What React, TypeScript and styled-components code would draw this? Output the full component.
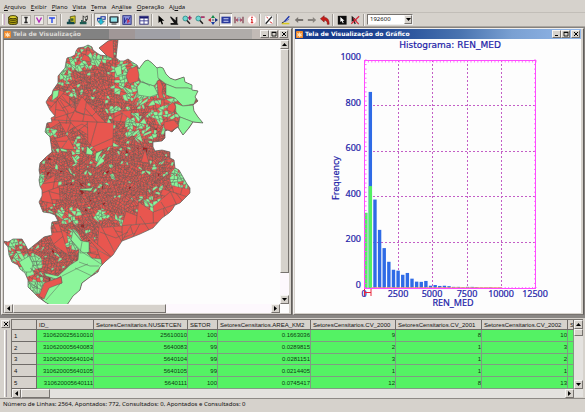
import React from "react";
import styled, { createGlobalStyle, css } from "styled-components";

const FACE = "#d6d2cc";
const UI_FONT = `"Noto Sans", "Open Sans", sans-serif`;
const GRID_FONT = `"Liberation Sans", Arial, sans-serif`;

const GlobalStyle = createGlobalStyle`
  * { box-sizing: border-box; }
  body { margin: 0; background: ${FACE}; }
  button, select { font: inherit; color: inherit; padding: 0; margin: 0; border: 0; background: none; border-radius: 0; }
`;

const raised = css`
  border: 1px solid;
  border-color: #f6f4f2 #77736f #77736f #f6f4f2;
`;

const Page = styled.div`
  display: flex;
  flex-direction: column;
  height: 100vh;
  min-height: 300px;
  background: ${FACE};
  color: #111;
  font: 6px/10px ${UI_FONT};
  overflow: hidden;
`;

/* ---------- menu and toolbar ---------- */

const MenuBar = styled.nav`
  display: flex;
  flex: none;
  gap: 5px;
  height: 12px;
  padding: 1px 4px 0;
`;

const MenuItem = styled.button`
  line-height: 10px;
  white-space: nowrap;
`;

const Toolbar = styled.div`
  display: flex;
  flex: none;
  align-items: center;
  height: 15px;
  padding: 0 2px;
  border-top: 1px solid #c2beb8;
  border-bottom: 1px solid #aaa6a0;
`;

const Grip = styled.span`
  width: 3px;
  height: 11px;
  margin-right: 1px;
  border-left: 1px solid #fff;
  border-right: 1px solid #c8a8c8;
`;

const ToolButton = styled.button<{ $pressed?: boolean }>`
  width: 13px;
  height: 13px;
  flex: none;
  display: grid;
  place-items: center;
  ${(p) =>
    p.$pressed &&
    css`
      background: #e8e6e2;
      box-shadow: inset 1px 1px #98948e, inset -1px -1px #fff;
    `}
  svg {
    display: block;
    width: 10px;
    height: 10px;
  }
`;

const Separator = styled.span<{ $wide?: boolean }>`
  flex: none;
  width: 2px;
  height: 12px;
  margin: 0 ${(p) => (p.$wide ? 2 : 1)}px;
  border-left: 1px solid #a29e98;
  border-right: 1px solid #f2f0ee;
`;

const Combo = styled.label`
  display: flex;
  width: 46px;
  height: 11px;
  background: #fff;
  border: 1px solid;
  border-color: #77736f #eee #eee #77736f;
`;

const ComboSelect = styled.select`
  appearance: none;
  flex: 1;
  min-width: 0;
  padding-left: 2px;
  line-height: 9px;
  outline: 0;
`;

const ComboArrow = styled.span`
  width: 8px;
  height: 9px;
  flex: none;
  display: grid;
  place-items: center;
  background: ${FACE};
  pointer-events: none;
  ${raised}
`;

/* ---------- windows ---------- */

const Workspace = styled.main`
  display: grid;
  grid-template-columns: minmax(0, 1fr) minmax(0, 1fr);
  flex: 1;
  min-height: 0;
  gap: 1px;
  padding: 1px 1px 0;
  background: #85817d;
  border-bottom: 3px solid #8a8784;
`;

const WindowFrame = styled.section`
  display: flex;
  flex-direction: column;
  min-width: 0;
  min-height: 0;
  background: ${FACE};
  padding: 0 2px 1px 1px;
  border: 1px solid;
  border-color: #f0eeec #615e5b #77736f #f0eeec;
`;

const TitleBar = styled.header<{ $active?: boolean }>`
  display: flex;
  flex: none;
  align-items: center;
  height: 10px;
  padding: 0 1px;
  gap: 1px;
  color: ${(p) => (p.$active ? "#fff" : "#dcd9d5")};
  background: ${(p) =>
    p.$active
      ? "linear-gradient(90deg, #173c8c 0 22%, #2f59a0 42%, #4a74b0 58%, #7aa0d2 76%, #93b8ea 100%)"
      : "linear-gradient(90deg, #828282 0 37%, #a09797 37% 46%, #a0a0a6 46% 62%, #b0acaa 62% 87%, #c2bab6 87%)"};
`;

const TitleText = styled.h1`
  margin: 0;
  flex: 1;
  padding-left: 1px;
  font: bold 6px/10px "DejaVu Sans", Verdana, sans-serif;
  white-space: nowrap;
  overflow: hidden;
`;

const TitleIcon = styled.svg`
  width: 7px;
  height: 7px;
  flex: none;
`;

const CaptionButton = styled.button<{ $gap?: boolean }>`
  && {
    width: 9px;
    height: 8px;
    flex: none;
    display: grid;
    place-items: center;
    background: ${FACE};
    margin-left: ${(p) => (p.$gap ? "0" : "-1px")};
    ${raised}
  }
  svg {
    width: 6px;
    height: 6px;
    display: block;
  }
`;

const Pane = styled.div`
  flex: 1;
  min-height: 0;
  min-width: 0;
  background: #fdfdfd;
`;

const ScrollPane = styled.div`
  display: grid;
  grid-template-columns: minmax(0, 1fr) 9px;
  grid-template-rows: minmax(0, 1fr) 9px;
  flex: 1;
  min-height: 0;
  background: #fdfdfd;
  border-top: 1px solid #6c6966;
  border-left: 1px solid #8c8884;
`;

const Drawing = styled.svg`
  display: block;
  width: 100%;
  height: 100%;
`;

const Track = styled.div<{ $vertical?: boolean; $tone?: string }>`
  display: flex;
  flex-direction: ${(p) => (p.$vertical ? "column" : "row")};
  min-width: 0;
  min-height: 0;
  background: ${(p) => p.$tone ?? "#fdf8fd"};
`;

const ArrowButton = styled.button`
  && {
    width: 9px;
    height: 9px;
    flex: none;
    display: grid;
    place-items: center;
    background: ${FACE};
    ${raised}
  }
`;

const Thumb = styled.div<{ $share: number }>`
  flex: ${(p) => p.$share} 1 0;
  background: ${FACE};
  ${raised}
`;

const Rest = styled.div<{ $share: number }>`
  flex: ${(p) => p.$share} 1 0;
`;

/* ---------- attribute table ---------- */

const TableDock = styled.section`
  display: flex;
  flex: none;
  height: 81px;
  padding: 1px 2px 1px 0;
  border-bottom: 1px solid #8e8a86;
`;

const DockHandle = styled.div`
  width: 11px;
  flex: none;
  display: flex;
  flex-direction: column;
  align-items: center;
  gap: 2px;
  padding-top: 1px;
`;

const DockGrip = styled.span`
  flex: 1;
  width: 3px;
  border-left: 1px solid #fff;
  border-right: 1px solid #a09aa0;
`;

const DockBody = styled.div`
  flex: 1;
  min-width: 0;
  display: grid;
  grid-template-columns: minmax(0, 1fr) 9px;
  grid-template-rows: 69px 9px;
  border-left: 1px solid #77736f;
  border-top: 1px solid #77736f;
  background: #e4e2df;
`;

const DataTable = styled.table`
  width: 100%;
  height: 69px;
  table-layout: fixed;
  border-collapse: separate;
  border-spacing: 0;
  font: 6px/8px ${GRID_FONT};
`;

const HeadCell = styled.th`
  overflow: hidden;
  white-space: nowrap;
  text-align: left;
  font-weight: normal;
  padding: 1px 0 0 2px;
  background: ${FACE};
  border-right: 1px solid #6f6b68;
  border-bottom: 1px solid #6f6b68;
`;

const Cell = styled.td`
  overflow: hidden;
  text-align: right;
  padding: 0;
  color: #0c3c12;
  background: #54f264;
  border-right: 1px solid #7f9c82;
  border-bottom: 1px solid #7f9c82;
`;

const StatusBar = styled.footer`
  flex: none;
  height: 13px;
  padding: 0 3px;
  line-height: 11px;
  white-space: nowrap;
`;

/* ---------- small glyphs ---------- */

const Arrow = ({ dir }: { dir: "up" | "down" | "left" | "right" }) => {
  const d = {
    up: "M0 4L2.5 1L5 4Z",
    down: "M0 1L2.5 4L5 1Z",
    left: "M4 0L1 2.5L4 5Z",
    right: "M1 0L4 2.5L1 5Z",
  }[dir];
  return (
    <svg width="5" height="5" viewBox="0 0 5 5">
      <path d={d} fill="#000" />
    </svg>
  );
};

const Lens = ({ mark }: { mark: React.ReactNode }) => (
  <>
    <circle cx="4" cy="4.2" r="2.9" fill="#6fd6d2" stroke="#2a8c88" />
    <path d="M6 6.5L9.5 10.5" stroke="#222" strokeWidth="1.8" />
    {mark}
  </>
);

const Letter = ({ d, color }: { d: string; color: string }) => (
  <>
    <rect x=".5" y=".5" width="11" height="11" fill="#eceae6" stroke="#a8a49e" />
    <path d={d} stroke={color} strokeWidth="1.7" fill="none" />
  </>
);

const glyphs: Record<string, React.ReactNode> = {
  database: (
    <>
      <path d="M.8 2.5V10c0 2 10.400 2 10.400 0V2.500z" fill="#a89a10" stroke="#2b2800" />
      <ellipse cx="6" cy="2.600" rx="5" ry="1.900" fill="#e0d330" stroke="#2b2800" />
      <path d="M1 5.200c1 1.700 9 1.700 10 0M1 7.800c1 1.700 9 1.700 10 0" stroke="#3b3700" fill="none" />
    </>
  ),
  infoLayer: <Letter color="#222" d="M4 3h4M6 3v6M4 9h4" />,
  vector: <Letter color="#b02cb8" d="M3 3l3 5.5L9 3" />,
  theme: <Letter color="#2848e8" d="M2.500 3.500h7M6 3.500V9.500" />,
  importLayer: (
    <>
      <path d="M5 2l6-1v9H6z" fill="#d8cc28" stroke="#3a3a00" strokeWidth=".8" />
      <path d="M1 11h9V8H5V5H3v3H1z" fill="#14484c" />
      <path d="M6 4h3v3H6z" fill="#40602a" />
    </>
  ),
  importTable: (
    <>
      <path d="M5 1l2 2 3-2v4l-2 3H5z" fill="#e8e8e0" stroke="#222" />
      <path d="M1 11h8V8.5H4.5V6H2.5v2.5H1z" fill="#1d5a50" />
      <path d="M7 4l3 1-2 3z" fill="#333" />
    </>
  ),
  draw: (
    <>
      <path d="M2 7V4h4V2h5v3H8" fill="none" stroke="#1530a0" strokeWidth="1.3" />
      <path d="M4.500 4.500h3v3h2.500L6 11.500 2 7.500h2.500z" fill="#26c4dc" stroke="#125a70" strokeWidth=".7" />
    </>
  ),
  screen: (
    <>
      <rect x=".5" y="1.500" width="11" height="8" rx="1.500" fill="#333c44" />
      <rect x="2.200" y="3" width="7.400" height="5" fill="#8fe2e8" />
      <path d="M3 10.800h6" stroke="#444" strokeWidth="1.300" />
    </>
  ),
  chart: (
    <>
      <rect x="1" y=".8" width="10" height="10.400" fill="#8a90d8" stroke="#202878" />
      <path d="M3 10V3M3 9l3-5 2 2 2-4" stroke="#18208c" fill="none" />
      <path d="M7 10V6l2 2" stroke="#d02840" fill="none" strokeWidth="1.3" />
    </>
  ),
  grid: (
    <>
      <rect x="1" y="1.500" width="10" height="9.500" fill="#fff" stroke="#18186c" />
      <path d="M1 3h10" stroke="#18186c" strokeWidth="2.400" />
      <path d="M6 3v8M1 7h10" stroke="#30308c" />
    </>
  ),
  pointer: <path d="M3 .5v9l2.2-2L7 11.5l1.5-.7L7 7h3z" fill="#000" />,
  area: (
    <>
      <path d="M2 1.5l6 5V3l2-1v9H2V9.5h4L1.5 3z" fill="#151515" />
      <path d="M2 11h9" stroke="#151515" strokeWidth="1.4" />
    </>
  ),
  zoomIn: <Lens mark={<path d="M9.3 1v5M7 3.5h4.6" stroke="#a01858" strokeWidth="1.6" />} />,
  zoomOut: <Lens mark={<path d="M7 2.5h4.6" stroke="#a01858" strokeWidth="1.8" />} />,
  pan: (
    <>
      <path d="M6 0l2.400 3.500H3.600z" fill="#108848" />
      <path d="M6 12L3.600 8.500h4.800z" fill="#1838a0" />
      <path d="M0 6l3.500-2.400v4.800z" fill="#c02030" />
      <path d="M12 6L8.500 3.600v4.800z" fill="#10287c" />
      <circle cx="6" cy="6" r="1" fill="#204068" />
    </>
  ),
  fit: (
    <>
      <rect x=".5" y="2" width="11" height="8" fill="#2a3a9c" />
      <path d="M3 4.5h6M3 7.5h6" stroke="#dce0ff" strokeWidth="1.1" />
    </>
  ),
  distance: (
    <>
      <path d="M1.2 2v8M10.8 2v8" stroke="#783848" strokeWidth="1.4" />
      <path d="M2 6l2.5-2.5v5zM10 6L7.5 3.5v5z" fill="#d03040" />
      <path d="M3 6h6" stroke="#5868a0" />
      <path d="M4 3.5h4" stroke="#8890b8" />
    </>
  ),
  info: (
    <>
      <circle cx="6" cy="6" r="5.600" fill="#fff" stroke="#e8b8b8" strokeWidth=".7" />
      <path d="M6 5v4.5M4.8 5.2h1.6M4.5 9.3h3" stroke="#d81818" strokeWidth="1.3" />
      <circle cx="6" cy="2.8" r="1" fill="#d81818" />
    </>
  ),
  edit: (
    <>
      <rect x="1" y="1" width="10" height="10" fill="#fff" stroke="#bbb" strokeWidth=".6" />
      <path d="M2 10.5L9.5 2" stroke="#222" strokeWidth="1.6" />
      <path d="M3 2.5l2 1.5M7 8l3 2" stroke="#d83030" strokeWidth="1.2" />
    </>
  ),
  pencil: (
    <>
      <path d="M4 8l6-6.5" stroke="#1830a8" strokeWidth="1.6" />
      <path d="M4.8 8l5-3" stroke="#4860c8" />
      <path d="M1 10.3h9" stroke="#d8c820" strokeWidth="1.8" />
      <path d="M1 9.5l3-1.5" stroke="#222" />
    </>
  ),
  back: <path d="M1 6l4-3.5v2.3h6v2.4H5v2.3z" fill="#77736f" />,
  forward: <path d="M11 6L7 2.5v2.3H1v2.4h6v2.3z" fill="#88847f" />,
  undo: <path d="M.5 4.5L5 .8V3c4 0 6 2.5 6 8.2H8.8C9 7.5 7.5 6.3 5 6.3v2.2z" fill="#c81c18" stroke="#701010" strokeWidth=".6" />,
  selectPoint: (
    <>
      <rect x="1" y="1" width="10.5" height="10.5" fill="#0c0c0c" />
      <path d="M4 2.5v6l1.6-1.4L7 10l1-.5-1.2-2.7H9z" fill="#fff" />
    </>
  ),
  clearPoint: (
    <>
      <path d="M2 1v7.5l2-1.6L5.5 11l1.4-.6L5.5 6.5h3z" fill="#1a1a1a" />
      <path d="M1.5 10.5L11 1.5M4 4l6.5 7" stroke="#d82838" strokeWidth="1.4" />
    </>
  ),
};

type Tool = { name: string; label: string; pressed?: boolean };
const toolGroups: Tool[][] = [
  [
    { name: "database", label: "Banco de dados" },
    { name: "infoLayer", label: "Plano" },
    { name: "vector", label: "Vista" },
    { name: "theme", label: "Tema" },
  ],
  [
    { name: "importLayer", label: "Importar dados" },
    { name: "importTable", label: "Importar tabela" },
  ],
  [
    { name: "draw", label: "Desenhar", pressed: true },
    { name: "screen", label: "Tela", pressed: true },
    { name: "chart", label: "Gráfico" },
  ],
  [{ name: "grid", label: "Grade" }],
  [
    { name: "pointer", label: "Cursor" },
    { name: "area", label: "Área" },
    { name: "zoomIn", label: "Aumentar" },
    { name: "zoomOut", label: "Diminuir" },
    { name: "pan", label: "Mover" },
    { name: "fit", label: "Ajustar", pressed: true },
    { name: "distance", label: "Distância" },
    { name: "info", label: "Informação" },
  ],
  [{ name: "edit", label: "Editar" }],
  [
    { name: "pencil", label: "Lápis" },
    { name: "back", label: "Anterior" },
    { name: "forward", label: "Próximo" },
    { name: "undo", label: "Desfazer" },
  ],
  [
    { name: "selectPoint", label: "Apontar" },
    { name: "clearPoint", label: "Limpar" },
  ],
];

/* ---------- census map ---------- */

type Pt = [number, number];

const outline =
  "M99 48L108 41L112 40L114 38L118 40L117 49L116 58L120 61L124 61L128 59L132 62L137 65L139 69L141 66L145 61L148 60L152 63L157 68L160 67L163 68L166 74L170 78L175 80L184 77L185 82L192 85L192 90L198 91L195 97L198 101L193 105L194 111L198 117L203 123L193 122L189 128L183 135L179 129L178 127L175 129L172 132L168 130L165 131L165 138L162 141L153 142L153 147L155 151L162 150L170 152L170 158L174 160L175 168L179 170L183 177L187 184L190 188L190 193L185 198L180 203L175 205L172 210L169 213L162 218L153 228L140 234L130 238L122 241L113 255L106 261L100 267L98 272L90 277L82 283L80 290L73 296L67 305L50 305L45 302L38 297L33 292L28 287L28 280L25 273L20 269L18 265L12 262L9 255L8 247L3 241L8 242L13 239L22 239L25 244L28 250L33 246L38 242L44 237L52 235L51 228L52 222L58 221L55 215L50 213L43 212L41 207L39 202L42 196L42 190L40 186L39 180L40 175L39 170L40 163L46 157L52 152L51 144L50 137L45 132L47 123L52 122L51 118L55 116L50 110L46 102L49 97L52 94L53 90L58 83L58 76L65 68L66 62L67 58L71 57L75 55L76 51L78 48L84 47L88 45L92 47L93 50L97 53L100 55L107 56L103 52Z";

interface Zone {
  x: number;
  y: number;
  rx: number;
  ry: number;
  size: number;
  green: number;
}

// Later zones win over earlier ones.
const zones: Zone[] = [
  { x: 85, y: 57, rx: 26, ry: 14, size: 10, green: 0.6 },
  { x: 62, y: 76, rx: 9, ry: 9, size: 9, green: 0.65 },
  { x: 75, y: 92, rx: 7, ry: 5, size: 6, green: 0.4 },
  { x: 125, y: 78, rx: 14, ry: 20, size: 12, green: 0.7 },
  { x: 100, y: 77, rx: 15, ry: 12, size: 7, green: 0.03 },
  { x: 147, y: 94, rx: 20, ry: 11, size: 10, green: 0.7 },
  { x: 166, y: 112, rx: 20, ry: 16, size: 12, green: 0.5 },
  { x: 135, y: 124, rx: 9, ry: 11, size: 10, green: 0.65 },
  { x: 143, y: 133, rx: 14, ry: 6, size: 9, green: 0.3 },
  { x: 113, y: 110, rx: 8, ry: 3, size: 7, green: 0.6 },
  { x: 59, y: 108, rx: 14, ry: 18, size: 70, green: 0 },
  { x: 80, y: 118, rx: 20, ry: 13, size: 90, green: 0 },
  { x: 98, y: 136, rx: 10, ry: 14, size: 240, green: 0 },
  { x: 120, y: 115, rx: 9, ry: 4, size: 60, green: 0 },
  { x: 66, y: 142, rx: 7, ry: 7, size: 60, green: 0 },
  { x: 50, y: 133, rx: 7, ry: 5, size: 10, green: 0.8 },
  { x: 76, y: 152, rx: 4, ry: 9, size: 9, green: 0.5 },
  { x: 99, y: 160, rx: 3, ry: 5, size: 20, green: 0.8 },
  { x: 113, y: 143, rx: 3, ry: 5, size: 9, green: 0.4 },
  { x: 180, y: 180, rx: 9, ry: 14, size: 10, green: 0.75 },
  { x: 168, y: 164, rx: 5, ry: 5, size: 9, green: 0.4 },
  { x: 41, y: 180, rx: 5, ry: 6, size: 8, green: 0.6 },
  { x: 50, y: 192, rx: 8, ry: 14, size: 70, green: 0 },
  { x: 70, y: 215, rx: 12, ry: 9, size: 9, green: 0.45 },
  { x: 100, y: 216, rx: 5, ry: 5, size: 10, green: 0.6 },
  { x: 119, y: 220, rx: 4, ry: 4, size: 8, green: 0.5 },
  { x: 152, y: 203, rx: 8, ry: 6, size: 8, green: 0.6 },
  { x: 59, y: 236, rx: 7, ry: 12, size: 160, green: 0 },
  { x: 177, y: 202, rx: 17, ry: 13, size: 260, green: 0 },
  { x: 150, y: 224, rx: 22, ry: 13, size: 260, green: 0 },
  { x: 118, y: 234, rx: 22, ry: 8, size: 70, green: 0 },
  { x: 106, y: 252, rx: 18, ry: 14, size: 360, green: 0 },
  { x: 14, y: 248, rx: 8, ry: 14, size: 8, green: 0.6 },
  { x: 26, y: 266, rx: 9, ry: 9, size: 45, green: 0.9 },
  { x: 34, y: 262, rx: 7, ry: 8, size: 10, green: 0.7 },
  { x: 34, y: 285, rx: 10, ry: 10, size: 10, green: 0.8 },
  { x: 30, y: 277, rx: 5, ry: 4, size: 8, green: 0.1 },
  { x: 73, y: 240, rx: 7, ry: 10, size: 12, green: 0.8 },
];

// Parcels that are too large to come out of the generated mesh.
const parcels: { d: string; green?: boolean }[] = [
  { green: true, d: "M137 69L148 58L158 68L159 80L154 86L141 82L137 74Z" },
  { green: true, d: "M141 82L154 86L158 94L150 97L138 95L137 87Z" },
  { green: true, d: "M157 67L165 66L170 78L176 80L184 76L193 84L192 90L188 88L176 88L166 84L158 78Z" },
  { green: true, d: "M166 84L176 88L188 88L199 91L194 104L183 106L175 98L166 95Z" },
  { green: true, d: "M175 103L183 106L194 105L196 113L204 124L193 122L180 117L176 112Z" },
  { green: true, d: "M180 117L193 122L183 136L178 127Z" },
  { d: "M157 81L160 80L163 87L162 93L164 98L159 99L158 92Z" },
  { d: "M168 106L173 102L176 107L173 113L167 110Z" },
  { d: "M164 122L174 120L179 126L170 132L164 128Z" },
  { d: "M98 48L107 40L113 39L114 59L107 56L102 55Z" },
  { d: "M129 69L137 66L139 75L138 81L129 84L126 76Z" },
  { d: "M84 54L89 57L91 62L86 61L81 60Z" },
  { green: true, d: "M114 68L121 65L122 74L117 76Z" },
  { green: true, d: "M53 91L59 90L58 96L52 101Z" },
  { green: true, d: "M87 146L93 152L92 155L86 154Z" },
  { green: true, d: "M96 153L103 150L99 156L97 162L95 160Z" },
  { green: true, d: "M60 148L67 150L67 152L61 151Z" },
  { green: true, d: "M80 189L91 188L94 186L91 191L80 190Z" },
  { d: "M141 162L145 149L149 163Z" },
  {
    green: true,
    d: "M73 231L81 241L89 242L89 252L87 253L92 258L101 259L102 266L90 277L82 283L80 290L67 305L48 305L42 299L50 286L62 283L61 276L56 279L46 276L44 273L58 276L70 265L78 260L79 250L71 240Z",
  },
  { d: "M44 283L61 277L62 283L49 288L44 299L39 296Z" },
  { green: true, d: "M19 262L29 256L33 264L31 272L25 272Z" },
];

const parcelLines =
  "M71 240L82 252L95 260L101 264M80 253L96 252M79 262L90 266L99 266M62 276L78 268L88 264M75 268L92 276M60 284L46 300M30 268L40 276L52 280M36 262L41 276M142 81L150 86M82 242L80 253M161 202L168 213M140 216L149 230M100 232L116 238L128 232M92 222L97 236M60 100L68 112L66 124M74 96L76 112L92 116L96 112M55 118L74 112M70 130L82 124L88 128M62 96L72 108";

function makeRandom(seed: number) {
  let s = seed;
  return () => {
    s = (s * 1664525 + 1013904223) >>> 0;
    return s / 4294967296;
  };
}

function areaOf(poly: Pt[]) {
  let a = 0;
  poly.forEach(([x, y], i) => {
    const [u, v] = poly[(i + 1) % poly.length];
    a += x * v - u * y;
  });
  return Math.abs(a) / 2;
}

function centerOf(poly: Pt[]): Pt {
  const n = poly.length;
  return [poly.reduce((t, p) => t + p[0], 0) / n, poly.reduce((t, p) => t + p[1], 0) / n];
}

function cut(poly: Pt[], c: Pt, nx: number, ny: number): [Pt[], Pt[]] {
  const a: Pt[] = [];
  const b: Pt[] = [];
  poly.forEach((p, i) => {
    const q = poly[(i + 1) % poly.length];
    const dp = (p[0] - c[0]) * nx + (p[1] - c[1]) * ny;
    const dq = (q[0] - c[0]) * nx + (q[1] - c[1]) * ny;
    (dp >= 0 ? a : b).push(p);
    if (dp >= 0 !== dq >= 0) {
      const t = dp / (dp - dq);
      const m: Pt = [p[0] + (q[0] - p[0]) * t, p[1] + (q[1] - p[1]) * t];
      a.push(m);
      b.push(m);
    }
  });
  return [a, b];
}

function traitsAt([x, y]: Pt) {
  let size = 6;
  let green = 0.05;
  for (const z of zones) {
    if (((x - z.x) / z.rx) ** 2 + ((y - z.y) / z.ry) ** 2 < 1) {
      size = z.size;
      green = z.green;
    }
  }
  return { size, green };
}

function buildMesh() {
  const rnd = makeRandom(77);
  const out = { red: "", green: "", dark: "" };
  const stack: Pt[][] = [[[0, 36], [208, 36], [208, 308], [0, 308]]];
  while (stack.length) {
    const poly = stack.pop() as Pt[];
    const c = centerOf(poly);
    const { size, green } = traitsAt(c);
    const area = areaOf(poly);
    if (area > 400 || area > size * (0.8 + rnd() * 1.4)) {
      const xs = poly.map((p) => p[0]);
      const ys = poly.map((p) => p[1]);
      const w = Math.max(...xs) - Math.min(...xs);
      const h = Math.max(...ys) - Math.min(...ys);
      const ang = (w > h ? 0 : Math.PI / 2) + (rnd() - 0.5) * 1.5;
      const pivot: Pt = [c[0] + (rnd() - 0.5) * w * 0.25, c[1] + (rnd() - 0.5) * h * 0.25];
      const [a, b] = cut(poly, pivot, Math.cos(ang), Math.sin(ang));
      if (a.length > 2 && b.length > 2) {
        stack.push(a, b);
        continue;
      }
    }
    const d = "M" + poly.map((p) => `${p[0].toFixed(1)} ${p[1].toFixed(1)}`).join("L") + "Z";
    const roll = rnd();
    if (roll < green) out.green += d;
    else if (roll > 0.985 && size < 8 && c[1] > 120) out.dark += d;
    else out.red += d;
  }
  return out;
}

const mesh = buildMesh();
const RED = "#e8564f";
const GREEN = "#8cf59a";
const EDGE = "#5c625c";

const CensusMap = () => (
  <Drawing viewBox="4 40 276 264" preserveAspectRatio="xMinYMin meet" role="img" aria-label="Mapa">
    <defs>
      <clipPath id="city">
        <path d={outline} />
      </clipPath>
    </defs>
    <g clipPath="url(#city)" stroke={EDGE} strokeWidth=".3" strokeLinejoin="round">
      <path d={mesh.red} fill={RED} />
      <path d={mesh.dark} fill="#a81c1c" />
      <path d={mesh.green} fill={GREEN} />
      {parcels.map((p, i) => (
        <path key={i} d={p.d} fill={p.green ? GREEN : RED} strokeWidth=".5" />
      ))}
      <path d={parcelLines} fill="none" strokeWidth=".5" />
    </g>
    <path d={outline} fill="none" stroke={EDGE} strokeWidth=".7" />
  </Drawing>
);

/* ---------- histogram ---------- */

const frequencies = [
  0, 860, 388, 255, 175, 115, 80, 76, 58, 66, 41, 28, 27, 31, 10, 13, 9, 10, 8, 5, 5, 3, 5, 5, 4, 2, 2, 3, 1, 2,
];
const selected = [330, 447];
const plot = { left: 365, right: 536, top: 60, bottom: 288 };
const yOf = (v: number) => plot.bottom - (v / 1000) * (plot.bottom - plot.top);
const xOf = (v: number) => plot.left + (v / 12500) * (plot.right - plot.left);
const barX = (i: number) => plot.left + (i === 0 ? 0 : -1 + i * 4.63);
const ticks = Array.from({ length: 51 }, (_, i) => i);

const Histogram = () => (
  <Drawing
    viewBox="295 39 286 274"
    preserveAspectRatio="xMinYMin meet"
    role="img"
    aria-label="Histograma"
    fontFamily='"Noto Sans", sans-serif'
    fontSize="9"
    fill="#1c1ca8"
    stroke="none"
  >
    <g stroke="#c35ec6" strokeDasharray="2 2" shapeRendering="crispEdges">
      {[200, 400, 600, 800].map((v) => (
        <path key={v} d={`M${plot.left} ${Math.floor(yOf(v)) + 0.5}H${plot.right}`} />
      ))}
      {[2500, 5000, 7500, 10000].map((v) => (
        <path key={v} d={`M${Math.round(xOf(v)) - 0.5} ${plot.top}V${plot.bottom}`} />
      ))}
    </g>
    {frequencies.map((f, i) => (
      <rect key={i} x={barX(i)} y={yOf(f)} width="3.4" height={plot.bottom - yOf(f)} fill="#2f6be6" />
    ))}
    {selected.map((f, i) => (
      <rect key={i} x={barX(i)} y={yOf(f)} width={i ? 3.4 : 2.6} height={plot.bottom - yOf(f)} fill="#52f062" />
    ))}
    <rect
      x={plot.left - 0.5}
      y={plot.top + 0.5}
      width={plot.right - plot.left}
      height={plot.bottom - plot.top}
      fill="none"
      stroke="#ff4cff"
    />
    <g stroke="#ff4cff" strokeWidth=".8">
      {ticks.map((i) => {
        const x = plot.left + ((plot.right - plot.left) * i) / 50;
        const y = plot.top + ((plot.bottom - plot.top) * i) / 50;
        return (
          <path
            key={i}
            d={`M${x} ${plot.top}v2.5M${x} ${plot.bottom}v-1M${plot.left} ${y}h1.6M${plot.right} ${y}h-2`}
          />
        );
      })}
    </g>
    <path d="M372 287.5H502" stroke="#f0a070" strokeWidth=".7" />
    <g textAnchor="end" stroke="#1c1ca8" strokeWidth=".2">
      {[0, 200, 400, 600, 800, 1000].map((v) => (
        <text key={v} x="361" y={Math.round(yOf(v))}>
          {v}
        </text>
      ))}
    </g>
    <g textAnchor="middle" stroke="#1c1ca8" strokeWidth=".2">
      {[0, 2500, 5000, 7500, 10000, 12500].map((v) => (
        <text key={v} x={Math.round(xOf(v)) - 1} y="297">
          {v}
        </text>
      ))}
      <text x="450" y="48" fontFamily='"DejaVu Sans", sans-serif'>
        Histograma: REN_MED
      </text>
      <text x="453" y="306">
        REN_MED
      </text>
      <text x="339" y="178" transform="rotate(-90 339 178)">
        Frequency
      </text>
    </g>
    <path d="M364.5 289v7M371 289v7M365 292.500h6" stroke="#e8283c" fill="none" />
  </Drawing>
);

/* ---------- table data ---------- */

const columns: { title: string; width?: number }[] = [
  { title: "ID_", width: 57 },
  { title: "SetoresCensitarios.NUSETCEN", width: 94 },
  { title: "SETOR", width: 30 },
  { title: "SetoresCensitarios.AREA_KM2", width: 93 },
  { title: "SetoresCensitarios.CV_2000", width: 85 },
  { title: "SetoresCensitarios.CV_2001", width: 86 },
  { title: "SetoresCensitarios.CV_2002", width: 86 },
  { title: "S" },
];

const rows = [
  ["310620025610010", "25610010", "100", "0.1663036", "9", "8", "10"],
  ["310620005640083", "5640083", "99", "0.0289815", "2", "1", "3"],
  ["310620005640104", "5640104", "99", "0.0281151", "3", "1", "2"],
  ["310620005640105", "5640105", "99", "0.0214405", "1", "1", "1"],
  ["310620005640111", "5640111", "100", "0.0745417", "12", "8", "13"],
];

const menus: [string, number][] = [
  ["Arquivo", 0],
  ["Exibir", 0],
  ["Plano", 0],
  ["Vista", 0],
  ["Tema", 0],
  ["Análise", 2],
  ["Operação", 0],
  ["Ajuda", 2],
];

const CrossMark = () => (
  <svg viewBox="0 0 6 6">
    <path d="M1 1l4 4M5 1l-4 4" stroke="#000" />
  </svg>
);

const Caption = ({ title, active }: { title: string; active?: boolean }) => (
  <TitleBar $active={active}>
    <TitleIcon viewBox="0 0 8 8">
      <rect width="8" height="8" rx="1" fill="#f08a2c" />
      <path d="M1 2l2 1 1-2 1 2 2-1-1 2 1 2-2 0-1 1.500-1-2-2 1 1-2z" fill="#ffe2bc" />
    </TitleIcon>
    <TitleText>{title}</TitleText>
    <CaptionButton aria-label="Minimizar">
      <svg viewBox="0 0 6 6">
        <path d="M1 4.500h3" stroke="#000" />
      </svg>
    </CaptionButton>
    <CaptionButton aria-label="Maximizar">
      <svg viewBox="0 0 6 6">
        <path d="M1 1.500h4v3.500h-4z" stroke="#000" strokeWidth=".8" fill="none" />
        <path d="M.6 1.200h4.800" stroke="#000" />
      </svg>
    </CaptionButton>
    <CaptionButton aria-label="Fechar" $gap>
      <CrossMark />
    </CaptionButton>
  </TitleBar>
);

export default function App() {
  return (
    <Page>
      <GlobalStyle />
      <MenuBar>
        {menus.map(([name, at]) => (
          <MenuItem key={name}>
            {name.slice(0, at)}
            <u>{name[at]}</u>
            {name.slice(at + 1)}
          </MenuItem>
        ))}
      </MenuBar>
      <Toolbar role="toolbar">
        <Grip />
        {toolGroups.map((group, i) => (
          <React.Fragment key={i}>
            {i > 0 && <Separator $wide={i === 1} />}
            {group.map((t) => (
              <ToolButton key={t.name} aria-label={t.label} $pressed={t.pressed}>
                <svg viewBox="0 0 12 12" fill="none">
                  {glyphs[t.name]}
                </svg>
              </ToolButton>
            ))}
          </React.Fragment>
        ))}
        <Separator $wide />
        <Combo>
          <ComboSelect aria-label="Escala" defaultValue="192600">
            <option>192600</option>
          </ComboSelect>
          <ComboArrow>
            <Arrow dir="down" />
          </ComboArrow>
        </Combo>
      </Toolbar>

      <Workspace>
        <WindowFrame>
          <Caption title="Tela de Visualização" />
          <ScrollPane>
            <CensusMap />
            <Track $vertical>
              <ArrowButton aria-label="Acima">
                <Arrow dir="up" />
              </ArrowButton>
              <Thumb $share={91} />
              <Rest $share={9} />
              <ArrowButton aria-label="Abaixo">
                <Arrow dir="down" />
              </ArrowButton>
            </Track>
            <Track>
              <ArrowButton aria-label="Esquerda">
                <Arrow dir="left" />
              </ArrowButton>
              <Thumb $share={59} />
              <Rest $share={41} />
              <ArrowButton aria-label="Direita">
                <Arrow dir="right" />
              </ArrowButton>
            </Track>
          </ScrollPane>
        </WindowFrame>
        <WindowFrame>
          <Caption title="Tela de Visualização do Gráfico" active />
          <Pane>
            <Histogram />
          </Pane>
        </WindowFrame>
      </Workspace>

      <TableDock>
        <DockHandle>
          <CaptionButton aria-label="Fechar tabela" $gap>
            <CrossMark />
          </CaptionButton>
          <DockGrip />
        </DockHandle>
        <DockBody>
          <DataTable>
            <colgroup>
              <col width={25} />
              {columns.map((c) => (
                <col key={c.title} width={c.width} />
              ))}
            </colgroup>
            <thead>
              <tr>
                <HeadCell />
                {columns.map((c) => (
                  <HeadCell key={c.title} scope="col">
                    {c.title}
                  </HeadCell>
                ))}
              </tr>
            </thead>
            <tbody>
              {rows.map((r, i) => (
                <tr key={r[0]}>
                  <HeadCell scope="row">{i + 1}</HeadCell>
                  {r.map((v, j) => (
                    <Cell key={j}>{v}</Cell>
                  ))}
                  <Cell />
                </tr>
              ))}
            </tbody>
          </DataTable>
          <Track $vertical $tone="#e4e2df">
            <ArrowButton aria-label="Linha acima">
              <Arrow dir="up" />
            </ArrowButton>
            <Thumb $share={10} />
            <Rest $share={90} />
            <ArrowButton aria-label="Linha abaixo">
              <Arrow dir="down" />
            </ArrowButton>
          </Track>
          <Track $tone="#e4e2df">
            <ArrowButton aria-label="Coluna anterior">
              <Arrow dir="left" />
            </ArrowButton>
            <Thumb $share={5} />
            <Rest $share={95} />
            <ArrowButton aria-label="Próxima coluna">
              <Arrow dir="right" />
            </ArrowButton>
          </Track>
        </DockBody>
      </TableDock>
      <StatusBar>Número de Linhas: 2564, Apontados: 772, Consultados: 0, Apontados e Consultados: 0</StatusBar>
    </Page>
  );
}
